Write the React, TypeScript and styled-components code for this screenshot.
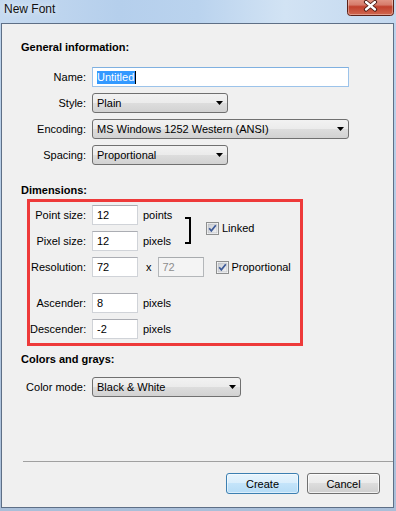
import React from 'react';
import styled, { createGlobalStyle } from 'styled-components';

const GlobalStyle = createGlobalStyle`
  html, body {
    margin: 0;
    padding: 0;
  }
  body {
    font-family: "Liberation Sans", Arial, sans-serif;
    font-size: 11px;
    color: #000;
  }
`;

const Window = styled.div`
  box-sizing: border-box;
  width: 396px;
  height: 511px;
  display: flex;
  flex-direction: column;
  padding: 0 2px 3px 1px;
  background: linear-gradient(180deg, #c8dcf1 0%, #bcd3ec 23px, #aabfd9 100%);
`;

const TitleBar = styled.div`
  height: 23px;
  display: flex;
  align-items: flex-start;
  padding-left: 4px;
  margin: 0 -2px 0 -1px;
  padding-right: 2px;
  background: linear-gradient(90deg, #c6daf0 0%, #b5cfec 30%, #bad3ee 50%, #d2e3f4 72%, #c3d8ef 100%);
`;

const Title = styled.span`
  font-size: 12px;
  line-height: 15px;
  margin-top: 2px;
  color: #111;
  text-shadow: 0 0 6px rgba(255, 255, 255, 0.9);
`;

const CloseBox = styled.div`
  margin-left: auto;
  width: 47px;
  height: 16px;
`;

const Client = styled.div`
  flex: 1;
  display: flex;
  flex-direction: column;
  border: 1px solid #5e6f86;
  background: #f0f0f0;
`;

const Body = styled.div`
  padding: 16px 0 0 19px;
  display: flex;
  flex-direction: column;
  align-items: flex-start;
`;

const SectionTitle = styled.div<{ $top?: number; $bottom: number }>`
  font-weight: bold;
  line-height: 14px;
  height: 14px;
  margin-top: ${(p) => p.$top ?? 0}px;
  margin-bottom: ${(p) => p.$bottom}px;
`;

const Rows = styled.div`
  display: flex;
  flex-direction: column;
  gap: 6px;
`;

const Row = styled.div<{ $top?: number }>`
  display: flex;
  align-items: center;
  height: 20px;
  margin-top: ${(p) => p.$top ?? 0}px;
`;

const Label = styled.span<{ $w: number }>`
  width: ${(p) => p.$w}px;
  margin-right: 6px;
  text-align: right;
  white-space: nowrap;
`;

const TextBox = styled.div<{ $w: number; $focused?: boolean; $disabled?: boolean }>`
  box-sizing: border-box;
  width: ${(p) => p.$w}px;
  height: 20px;
  display: flex;
  align-items: center;
  padding: 0 4px;
  border: 1px solid ${(p) => (p.$focused ? '#9cc3ea' : p.$disabled ? '#b4b7ba' : '#d0d3d8')};
  border-top-color: ${(p) => (p.$focused ? '#7fb0e0' : p.$disabled ? '#a8abae' : '#abadb3')};
  background: ${(p) => (p.$disabled ? '#f4f4f4' : '#fff')};
  color: ${(p) => (p.$disabled ? '#8d8d8d' : '#000')};
`;

const Selected = styled.span`
  background: #3399ff;
  color: #fff;
  line-height: 13px;
  padding: 0 1px 0 0;
  border-right: 1px solid #000;
`;

const Select = styled.div<{ $w: number }>`
  box-sizing: border-box;
  width: ${(p) => p.$w}px;
  height: 20px;
  display: flex;
  align-items: center;
  justify-content: space-between;
  padding: 0 4px;
  border: 1px solid #707070;
  border-radius: 3px;
  background: linear-gradient(180deg, #f2f2f2 0%, #ebebeb 50%, #dddddd 50%, #d2d2d2 100%);
`;

const RedBox = styled.div`
  box-sizing: border-box;
  width: 276px;
  margin-left: 6px;
  padding: 3px 0 4px 0;
  border: 3px solid #ee3a3a;
  display: flex;
  flex-direction: column;
  gap: 6px;
`;

const LinkedGroup = styled.div`
  display: flex;
  align-items: center;
`;

const Unit = styled.span<{ $w?: number }>`
  margin-left: 5px;
  width: ${(p) => (p.$w ? `${p.$w}px` : 'auto')};
`;

const Bracket = styled.div`
  width: 4px;
  height: 23px;
  margin-top: 4px;
  border: 2px solid #000;
  border-left: none;
`;

const Cross = styled.span`
  margin: 0 6px 0 8px;
`;

const CheckWrap = styled.label<{ $left: number }>`
  display: flex;
  align-items: center;
  gap: 3px;
  margin-left: ${(p) => p.$left}px;
`;

const Footer = styled.div`
  margin-top: auto;
`;

const Separator = styled.div`
  height: 1px;
  margin-left: 21px;
  background: #a0a0a0;
`;

const ButtonBar = styled.div`
  display: flex;
  justify-content: flex-end;
  gap: 8px;
  padding: 11px 13px 13px 0;
`;

const Button = styled.div<{ $primary?: boolean }>`
  box-sizing: border-box;
  width: 73px;
  height: 21px;
  display: flex;
  align-items: center;
  justify-content: center;
  border: 1px solid ${(p) => (p.$primary ? '#3c7fb1' : '#707070')};
  border-radius: 3px;
  box-shadow: inset 0 0 0 1px rgba(255, 255, 255, ${(p) => (p.$primary ? 0.5 : 0.7)});
  background: ${(p) =>
    p.$primary
      ? 'linear-gradient(180deg, #e7f4fd 0%, #d9eefc 50%, #c4e4fa 50%, #b6dcf6 100%)'
      : 'linear-gradient(180deg, #f2f2f2 0%, #ebebeb 50%, #dddddd 50%, #cfcfcf 100%)'};
`;

function Arrow() {
  return (
    <svg width="7" height="4" viewBox="0 0 7 4">
      <path d="M0 0 H7 L3.5 4 Z" fill="#000" />
    </svg>
  );
}

function CheckBox({ label, left }: { label: string; left: number }) {
  return (
    <CheckWrap $left={left}>
      <svg width="13" height="13" viewBox="0 0 13 13">
        <defs>
          <linearGradient id="cbg" x1="0" y1="0" x2="1" y2="1">
            <stop offset="0" stopColor="#c9ccd1" />
            <stop offset="1" stopColor="#f4f4f5" />
          </linearGradient>
        </defs>
        <rect x="0.5" y="0.5" width="12" height="12" fill="#fff" stroke="#8e8f8f" />
        <rect x="2" y="2" width="9" height="9" fill="url(#cbg)" stroke="#b0b3b8" strokeWidth="0.6" />
        <path d="M3.2 6.3 L5.3 8.8 L9.8 3.2" fill="none" stroke="#3d5a98" strokeWidth="1.7" />
      </svg>
      <span>{label}</span>
    </CheckWrap>
  );
}

function CloseButton() {
  return (
    <CloseBox>
      <svg width="47" height="16" viewBox="0 0 47 16">
        <defs>
          <linearGradient id="clg" x1="0" y1="0" x2="0" y2="1">
            <stop offset="0" stopColor="#e9a898" />
            <stop offset="0.45" stopColor="#d67c6b" />
            <stop offset="0.55" stopColor="#c1412d" />
            <stop offset="1" stopColor="#d16a52" />
          </linearGradient>
        </defs>
        <rect x="0.5" y="-4" width="46" height="19.5" rx="3" fill="url(#clg)" stroke="#5b2118" />
        <rect x="1.5" y="-3" width="44" height="17.5" rx="2" fill="none" stroke="rgba(255,255,255,0.35)" />
        <path d="M19 2 L28 9.5 M28 2 L19 9.5" stroke="#4a1a12" strokeWidth="4.2" strokeLinecap="round" />
        <path d="M19 2 L28 9.5 M28 2 L19 9.5" stroke="#fff" strokeWidth="2.3" strokeLinecap="round" />
      </svg>
    </CloseBox>
  );
}

export default function App() {
  return (
    <>
      <GlobalStyle />
      <Window>
        <TitleBar>
          <Title>New Font</Title>
          <CloseButton />
        </TitleBar>
        <Client>
          <Body>
            <SectionTitle $bottom={13}>General information:</SectionTitle>
            <Rows>
              <Row>
                <Label $w={65}>Name:</Label>
                <TextBox $w={257} $focused>
                  <Selected>Untitled</Selected>
                </TextBox>
              </Row>
              <Row>
                <Label $w={65}>Style:</Label>
                <Select $w={136}>
                  <span>Plain</span>
                  <Arrow />
                </Select>
              </Row>
              <Row>
                <Label $w={65}>Encoding:</Label>
                <Select $w={257}>
                  <span>MS Windows 1252 Western (ANSI)</span>
                  <Arrow />
                </Select>
              </Row>
              <Row>
                <Label $w={65}>Spacing:</Label>
                <Select $w={136}>
                  <span>Proportional</span>
                  <Arrow />
                </Select>
              </Row>
            </Rows>

            <SectionTitle $top={18} $bottom={2}>Dimensions:</SectionTitle>
            <RedBox>
              <LinkedGroup>
                <Rows>
                  <Row>
                    <Label $w={56}>Point size:</Label>
                    <TextBox $w={46}>12</TextBox>
                    <Unit $w={42}>points</Unit>
                  </Row>
                  <Row>
                    <Label $w={56}>Pixel size:</Label>
                    <TextBox $w={46}>12</TextBox>
                    <Unit $w={42}>pixels</Unit>
                  </Row>
                </Rows>
                <Bracket />
                <CheckBox label="Linked" left={15} />
              </LinkedGroup>
              <Row>
                <Label $w={56}>Resolution:</Label>
                <TextBox $w={46}>72</TextBox>
                <Cross>x</Cross>
                <TextBox $w={46} $disabled>72</TextBox>
                <CheckBox label="Proportional" left={12} />
              </Row>
              <Row $top={10}>
                <Label $w={56}>Ascender:</Label>
                <TextBox $w={46}>8</TextBox>
                <Unit>pixels</Unit>
              </Row>
              <Row>
                <Label $w={56}>Descender:</Label>
                <TextBox $w={46}>-2</TextBox>
                <Unit>pixels</Unit>
              </Row>
            </RedBox>

            <SectionTitle $top={6} $bottom={11}>Colors and grays:</SectionTitle>
            <Row>
              <Label $w={65}>Color mode:</Label>
              <Select $w={149}>
                <span>Black &amp; White</span>
                <Arrow />
              </Select>
            </Row>
          </Body>
          <Footer>
            <Separator />
            <ButtonBar>
              <Button $primary>Create</Button>
              <Button>Cancel</Button>
            </ButtonBar>
          </Footer>
        </Client>
      </Window>
    </>
  );
}
